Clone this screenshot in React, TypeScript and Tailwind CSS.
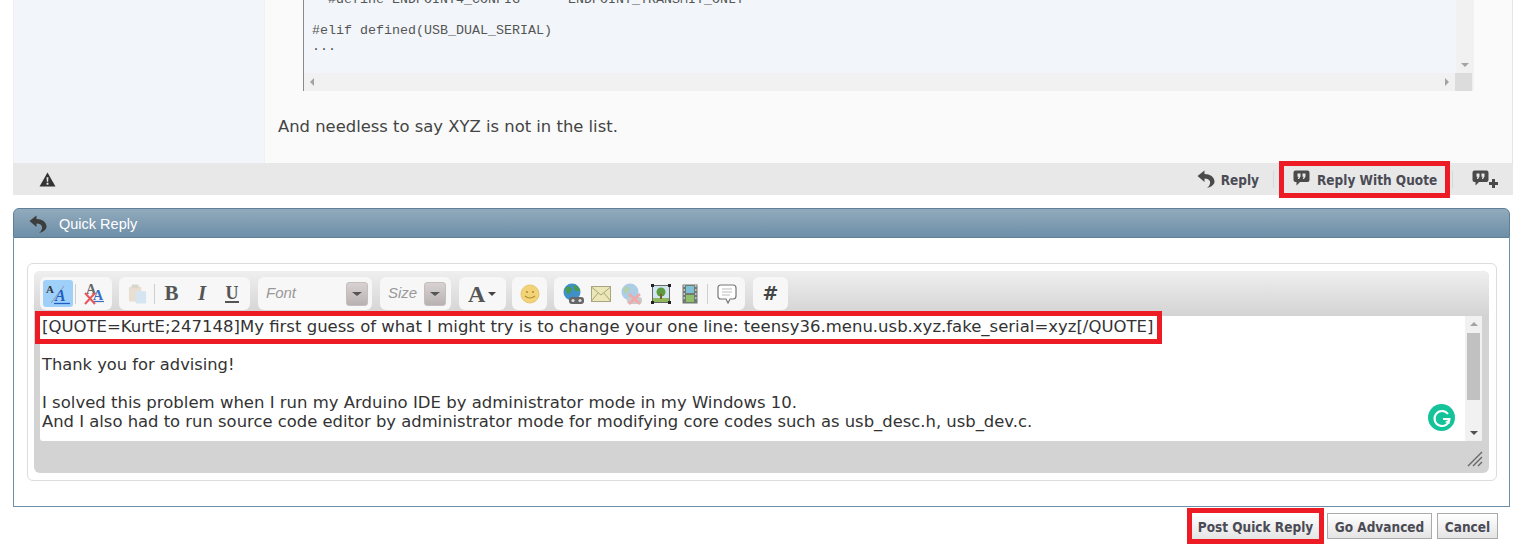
const UI = "font-['DejaVu_Sans',sans-serif]";
const BOLD = "font-['DejaVu_Sans',sans-serif] font-stretch-condensed text-[13.5px] font-bold whitespace-nowrap text-[#4b4b55]";

function ReplyArrow({ className = '' }: { className?: string }) {
  return (
    <svg viewBox="0 0 18 18" className={className}>
      <path d="M0.5 6 L7.5 0.5 V4 C13 4 17.5 7 17.5 11.5 C17.5 14.5 14.5 17 10 18 C12.5 16 13.5 13.5 13 11.5 C12.5 9.5 10 8.5 7.5 8.5 V12 Z" fill="currentColor" />
    </svg>
  );
}

function QuoteBubble({ plus = false }: { plus?: boolean }) {
  return (
    <svg viewBox="0 0 26 18" className="h-[18px] w-[26px] shrink-0">
      <path d="M2.5 0.5 H14.5 Q16.5 0.5 16.5 2.5 V10 Q16.5 12 14.5 12 H7 L3.5 15.5 V12 H2.5 Q0.5 12 0.5 10 V2.5 Q0.5 0.5 2.5 0.5 Z" fill="#4a4a4a" />
      <path d="M4.5 3.5 H7.5 V6.5 L6 9 H4.8 L5.6 6.8 H4.5 Z M9.5 3.5 H12.5 V6.5 L11 9 H9.8 L10.6 6.8 H9.5 Z" fill="#e8e8e8" />
      {plus && <path d="M20 9 H23 V12 H26 V15 H23 V18 H20 V15 H17 V12 H20 Z" fill="#4a4a4a" />}
    </svg>
  );
}

function Chevron() {
  return (
    <span className="flex h-[24px] w-[22px] items-center justify-center rounded-[3px] border border-[#c4bebe] bg-gradient-to-b from-[#d8d2d2] to-[#b9b2b2]">
      <span className="h-0 w-0 border-x-[5px] border-t-[4px] border-x-transparent border-t-[#555]" />
    </span>
  );
}

function Group({ className = '', children }: { className?: string; children: React.ReactNode }) {
  return <div className={`flex h-[33px] items-center rounded-[6px] bg-[#f7f7f7] ${className}`}>{children}</div>;
}

function ToolbarSep() {
  return <span className="block h-[20px] w-px bg-[#cfcfcf]" />;
}

function Toolbar() {
  return (
    <div className="flex h-[45px] items-start rounded-t-[6px] bg-gradient-to-b from-[#efefef] to-[#d3d3d3] pl-[6px] pt-[6px]">
      <Group className="w-[72px] pl-[3px]">
        <span className="flex h-[27px] w-[30px] items-center justify-center rounded-[3px] bg-[#9fd0fa]">
          <svg viewBox="0 0 26 22" className="h-[22px] w-[26px]">
            <text x="1" y="10" fontFamily="Liberation Serif" fontWeight="700" fontSize="11" fill="#333">A</text>
            <path d="M6 20 L19 3" stroke="#8a9aa8" strokeWidth="1" />
            <text x="10" y="18" fontFamily="Liberation Serif" fontWeight="700" fontStyle="italic" fontSize="16" fill="#1f5fc4">A</text>
            <path d="M9 20.5 H25" stroke="#1f5fc4" strokeWidth="1.3" />
          </svg>
        </span>
        <span className="ml-[2px] mr-[7px]"><ToolbarSep /></span>
        <svg viewBox="0 0 22 24" className="h-[24px] w-[22px] shrink-0">
          <text x="3" y="12" fontFamily="Liberation Serif" fontWeight="700" fontSize="14" fill="#666">A</text>
          <text x="10" y="18" fontFamily="Liberation Serif" fontWeight="700" fontSize="14" fill="#3a6fc0">A</text>
          <path d="M9 19.5 H21" stroke="#3a6fc0" strokeWidth="1.2" />
          <path d="M2 11 L12 22 M12 11 L2 22" stroke="#e8555a" strokeWidth="2" />
        </svg>
      </Group>
      <Group className="ml-[7px] w-[131px] pl-[9px]">
        <svg viewBox="0 0 20 22" className="h-[22px] w-[19px] shrink-0 opacity-70">
          <rect x="1" y="3" width="13" height="16" rx="2" fill="#e3d5c3" />
          <rect x="4" y="1" width="7" height="4" rx="1" fill="#cfc7bc" />
          <rect x="8" y="8" width="11" height="13" rx="1" fill="#c8dff0" />
        </svg>
        <span className="ml-[7px] mr-[9px]"><ToolbarSep /></span>
        <span className="w-[15px] text-center font-['Liberation_Serif',serif] text-[21px] font-bold leading-none text-[#555]">B</span>
        <span className="ml-[16px] w-[14px] text-center font-['Liberation_Serif',serif] text-[21px] font-bold italic leading-none text-[#555]">I</span>
        <span className="ml-[16px] w-[14px] border-b-2 border-[#555] text-center font-['Liberation_Serif',serif] text-[18px] font-bold leading-[16px] text-[#555]">U</span>
      </Group>
      <Group className="ml-[8px] w-[114px] justify-between pl-[8px] pr-[4px]">
        <span className="font-['Liberation_Sans',sans-serif] text-[15px] italic text-[#999]">Font</span>
        <Chevron />
      </Group>
      <Group className="ml-[8px] w-[71px] justify-between pl-[8px] pr-[5px]">
        <span className="font-['Liberation_Sans',sans-serif] text-[15px] italic text-[#999]">Size</span>
        <Chevron />
      </Group>
      <Group className="ml-[8px] w-[47px] pl-[9px]">
        <span className="font-['Liberation_Serif',serif] text-[24px] font-bold leading-none text-[#555]">A</span>
        <span className="ml-[3px] h-0 w-0 border-x-[4px] border-t-[4px] border-x-transparent border-t-[#444]" />
      </Group>
      <Group className="ml-[6px] w-[35px] justify-center">
        <svg viewBox="0 0 20 20" className="h-[20px] w-[20px]">
          <circle cx="10" cy="10" r="9" fill="#f3d377" stroke="#e6c46a" />
          <circle cx="7" cy="8" r="1" fill="#b08a30" />
          <circle cx="13" cy="8" r="1" fill="#b08a30" />
          <path d="M5 12 Q10 16 15 12" stroke="#b08a30" strokeWidth="1.2" fill="none" />
        </svg>
      </Group>
      <Group className="ml-[7px] w-[191px] pl-[8px]">
        <svg viewBox="0 0 22 22" className="h-[22px] w-[22px] shrink-0">
          <circle cx="10" cy="9" r="8.5" fill="#3f8fc8" />
          <path d="M3 5 Q8 2 10 6 Q9 10 5 11 Z M11 2 Q17 3 18 8 L13 8 Z" fill="#4a9b4a" />
          <rect x="7" y="14" width="15" height="7" rx="3" fill="#666" />
          <circle cx="11" cy="17.5" r="1.6" fill="#ddd" />
          <circle cx="18" cy="17.5" r="1.6" fill="#ddd" />
        </svg>
        <svg viewBox="0 0 20 16" className="ml-[7px] h-[16px] w-[20px] shrink-0">
          <rect x="0.5" y="0.5" width="19" height="15" fill="#ece6b8" stroke="#a8a67e" />
          <path d="M0.5 1 L10 9 L19.5 1 M0.5 15 L7 7 M19.5 15 L13 7" stroke="#a8a67e" fill="none" />
        </svg>
        <svg viewBox="0 0 22 22" className="ml-[9px] h-[22px] w-[22px] shrink-0 opacity-40">
          <circle cx="10" cy="9" r="8.5" fill="#3f8fc8" />
          <path d="M3 5 Q8 2 10 6 Q9 10 5 11 Z" fill="#4a9b4a" />
          <rect x="7" y="14" width="15" height="7" rx="3" fill="#888" />
          <path d="M9 11 L20 21 M20 11 L9 21" stroke="#e8333a" strokeWidth="2.4" />
        </svg>
        <svg viewBox="0 0 20 20" className="ml-[9px] h-[20px] w-[20px] shrink-0">
          <rect x="1.5" y="1.5" width="17" height="17" fill="#cfe6f2" stroke="#666" />
          <path d="M2 18 V14 L18 14 V18 Z" fill="#8fb85a" />
          <circle cx="10" cy="8" r="4.5" fill="#5d9a3c" />
          <rect x="9" y="10" width="2" height="5" fill="#7a5a30" />
          <path d="M0 0 H3 V3 H0 Z M17 0 H20 V3 H17 Z M0 17 H3 V20 H0 Z M17 17 H20 V20 H17 Z" fill="#222" />
        </svg>
        <svg viewBox="0 0 16 20" className="ml-[11px] h-[20px] w-[16px] shrink-0">
          <rect x="0.5" y="0.5" width="15" height="19" fill="#6f7a70" />
          <rect x="4" y="2" width="8" height="7" fill="#7fc0d8" />
          <rect x="4" y="11" width="8" height="7" fill="#8fbf6a" />
          <path d="M1.5 2 H3 M1.5 6 H3 M1.5 10 H3 M1.5 14 H3 M13 2 H14.5 M13 6 H14.5 M13 10 H14.5 M13 14 H14.5" stroke="#ddd" strokeWidth="1.5" />
        </svg>
        <span className="ml-[9px] mr-[9px]"><ToolbarSep /></span>
        <svg viewBox="0 0 20 20" className="h-[20px] w-[20px] shrink-0">
          <path d="M4 1 H16 Q19 1 19 4 V12 Q19 15 16 15 H13 L11 19 L9 15 H4 Q1 15 1 12 V4 Q1 1 4 1 Z" fill="#fff" stroke="#777" strokeWidth="1.2" />
          <path d="M5 5 H15 M5 8 H15 M5 11 H13" stroke="#bbb" />
        </svg>
      </Group>
      <Group className="ml-[8px] w-[35px] justify-center">
        <span className="font-['DejaVu_Sans',sans-serif] text-[19px] font-bold leading-none text-[#444]">#</span>
      </Group>
    </div>
  );
}

function Editor() {
  return (
    <div className="ml-[6px] mr-[7px] flex h-[125px] rounded-b-[3px] bg-white">
      <div className="relative flex-1 text-[16.5px] leading-[19px] text-[#333]">
        <div className="inline-block h-[23px] whitespace-nowrap bg-white pl-[2px] pr-[4px] pt-px outline-[5px] outline-[#ed1c24]">
          [QUOTE=KurtE;247148]My first guess of what I might try is to change your one line: teensy36.menu.usb.xyz.fake_serial=xyz[/QUOTE]
        </div>
        <div className="mt-[16px] pl-[2px] text-[16.3px]">Thank you for advising!</div>
        <div className="mt-[19px] pl-[2px]">I solved this problem when I run my Arduino IDE by administrator mode in my Windows 10.</div>
        <div className="pl-[2px] text-[16.4px]">And I also had to run source code editor by administrator mode for modifying core codes such as usb_desc.h, usb_dev.c.</div>
        <div className="absolute bottom-[10px] right-[10px] flex h-[27px] w-[27px] items-center justify-center rounded-full bg-[#15c39a]">
          <svg viewBox="0 0 20 20" className="h-[20px] w-[20px]">
            <path d="M16 6 A7.5 7.5 0 1 0 17.5 11 H11" fill="none" stroke="#fff" strokeWidth="2" />
            <path d="M13 14 L17.5 11 L17.5 16 Z" fill="#fff" />
          </svg>
        </div>
      </div>
      <div className="flex w-[17px] flex-col items-center bg-[#f1f1f1]">
        <span className="mt-[6px] h-0 w-0 border-x-[4px] border-b-[4px] border-x-transparent border-b-[#a3a3a3]" />
        <span className="mt-[7px] h-[67px] w-[13px] bg-[#c1c1c1]" />
        <span className="mb-[6px] mt-auto h-0 w-0 border-x-[4px] border-t-[4px] border-x-transparent border-t-[#505050]" />
      </div>
    </div>
  );
}

export default function App() {
  return (
    <div className={`h-[553px] w-[1526px] overflow-hidden bg-white ${UI}`}>
      <div className="ml-[13px] w-[1500px]">
        <div className="flex h-[163px] border-r border-[#e4e4e4]">
          <div className="h-full w-[252px] border-l border-r border-[#f0f0f0] bg-[#f2f5f9]" />
          <div className="flex-1 bg-[#fafafa]">
            <div className="ml-[38px] h-[91px] w-[1171px] border-l border-[#8a8a8a]">
              <div className="flex h-[73px]">
                <pre className="flex flex-1 flex-col justify-end overflow-hidden bg-[#f2f5f9] pb-[19px] pl-[8px] font-['Liberation_Mono',monospace] text-[13.33px] leading-[15.5px] text-[#555]">
{`  #define ENDPOINT4_CONFIG      ENDPOINT_TRANSMIT_ONLY

#elif defined(USB_DUAL_SERIAL)
...`}
                </pre>
                <div className="flex w-[18px] flex-col items-center justify-end bg-[#f1f1f1] pb-[6px]">
                  <span className="h-0 w-0 border-x-[4px] border-t-[4px] border-x-transparent border-t-[#a3a3a3]" />
                </div>
              </div>
              <div className="flex h-[18px] items-center bg-[#f1f1f1] pl-[6px]">
                <span className="h-0 w-0 border-y-[4px] border-r-[4px] border-y-transparent border-r-[#a3a3a3]" />
                <span className="ml-auto h-0 w-0 border-y-[4px] border-l-[4px] border-y-transparent border-l-[#a3a3a3]" />
                <span className="ml-[6px] mr-[2px] h-[18px] w-[17px] bg-[#dcdcdc]" />
              </div>
            </div>
            <p className="ml-[13px] mt-[26px] text-[16.4px] leading-[19px] text-[#444]">And needless to say XYZ is not in the list.</p>
          </div>
        </div>
        <div className={`flex h-[32px] items-center bg-[#e8e8e8] ${BOLD}`}>
          <svg viewBox="0 0 18 16" className="ml-[26px] h-[15px] w-[17px]">
            <path d="M9 0.5 L17.5 15.5 H0.5 Z" fill="#333" />
            <path d="M8 5.5 H10 L9.7 10.5 H8.3 Z M8 11.5 H10 V13.5 H8 Z" fill="#e8e8e8" />
          </svg>
          <ReplyArrow className="ml-auto h-[18px] w-[18px] text-[#4a4a4a]" />
          <span className="ml-[6px] pt-[2px]">Reply</span>
          <span className="ml-[14px] h-[17px] w-px bg-[#d8d8d8]" />
          <span className="ml-[10px] flex h-[27px] w-[161px] items-center pl-[9px] outline-[5px] outline-[#ed1c24]">
            <QuoteBubble />
            <span className="-ml-[2px] pt-[2px]">Reply With Quote</span>
          </span>
          <span className="ml-[7px] h-[17px] w-px bg-[#d8d8d8]" />
          <span className="ml-[19px] mr-[15px] flex"><QuoteBubble plus /></span>
        </div>
      </div>

      <div className="ml-[13px] mt-[13px] h-[299px] w-[1497px]">
        <div className="flex h-[30px] items-center rounded-t-[6px] border border-[#5f7f99] bg-gradient-to-b from-[#92aabc] to-[#6d8fa8] text-white">
          <ReplyArrow className="ml-[15px] mt-[2px] h-[18px] w-[18px] text-[#3d3d3d]" />
          <span className="ml-[12px] pt-[3px] font-['Liberation_Sans',sans-serif] text-[14.5px]">Quick Reply</span>
        </div>
        <div className="h-[269px] border-x border-b border-[#6f8fa8] pl-[13px] pr-[12px] pt-[25px]">
          <div className="h-[218px] rounded-[6px] border border-[#dcdcdc] pl-[6px] pr-[7px] pt-[7px]">
            <div className="relative h-[202px] rounded-[6px] bg-[#d3d3d3]">
              <Toolbar />
              <Editor />
              <svg viewBox="0 0 16 16" className="absolute bottom-[6px] right-[6px] h-[16px] w-[16px]">
                <path d="M1 15 L15 1 M6 15 L15 6 M11 15 L15 11" stroke="#666" strokeWidth="1.4" />
              </svg>
            </div>
          </div>
        </div>
      </div>

      <div className={`ml-[13px] mt-[6px] flex w-[1485px] justify-end gap-[8px] ${BOLD}`}>
        <button className="h-[26px] w-[127px] bg-gradient-to-b from-white to-[#e4e4e4] pt-[2px] outline-[5px] outline-[#ed1c24]">Post Quick Reply</button>
        <button className="h-[26px] w-[105px] border border-[#aaa] bg-gradient-to-b from-white to-[#e4e4e4] pt-[2px]">Go Advanced</button>
        <button className="-ml-[3px] h-[26px] w-[61px] border border-[#aaa] bg-gradient-to-b from-white to-[#e4e4e4] pt-[2px]">Cancel</button>
      </div>
    </div>
  );
}
